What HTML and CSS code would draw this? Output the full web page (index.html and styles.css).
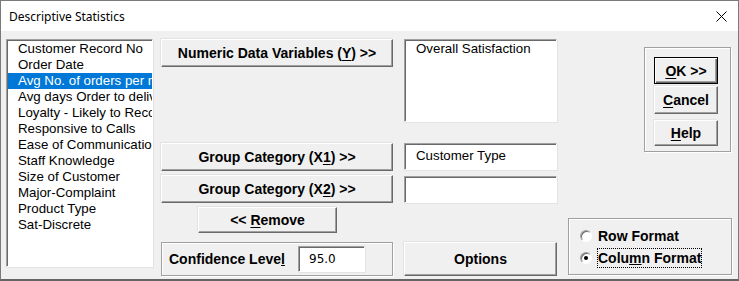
FILE: index.html
```html
<!DOCTYPE html>
<html>
    <head>
        <title>Descriptive Statistics</title>
        <link rel="stylesheet" href="styles.css">
    </head>
    <body>
        <div class="dialog">
            <div class="titlebar">
                <span class="title">Descriptive Statistics</span>
                <svg class="close" width="11" height="11" viewBox="0 0 11 11">
                    <path d="M0.5 0.5 L10.5 10.5 M10.5 0.5 L0.5 10.5" stroke="#000" stroke-width="1" fill="none"/>
                </svg>
            </div>
            <div class="dialog-body">
                <div class="col-list">
                    <ul class="listbox">
                        <li>Customer Record No</li>
                        <li>Order Date</li>
                        <li class="selected">Avg No. of orders per month</li>
                        <li>Avg days Order to delivery</li>
                        <li>Loyalty - Likely to Recommend</li>
                        <li>Responsive to Calls</li>
                        <li>Ease of Communication</li>
                        <li>Staff Knowledge</li>
                        <li>Size of Customer</li>
                        <li>Major-Complaint</li>
                        <li>Product Type</li>
                        <li>Sat-Discrete</li>
                    </ul>
                </div>

                <div class="col-buttons">
                    <button class="btn btn-numeric">Numeric Data Variables (<u>Y</u>) &gt;&gt;</button>
                    <button class="btn btn-group1">Group Category (X<u>1</u>) &gt;&gt;</button>
                    <button class="btn btn-group2">Group Category (X<u>2</u>) &gt;&gt;</button>
                    <button class="btn btn-remove">&lt;&lt; <u>R</u>emove</button>
                    <div class="frame frame-confidence">
                        <span class="label">Confidence Leve<u>l</u></span>
                        <div class="textbox textbox-confidence">95.0</div>
                    </div>
                </div>

                <div class="col-boxes">
                    <div class="textbox box-numeric">Overall Satisfaction</div>
                    <div class="textbox box-group1">Customer Type</div>
                    <div class="textbox box-group2"></div>
                    <button class="btn btn-options">Options</button>
                </div>

                <div class="col-right">
                    <div class="frame frame-actions">
                        <button class="btn btn-ok"><u>O</u>K &gt;&gt;</button>
                        <button class="btn btn-cancel"><u>C</u>ancel</button>
                        <button class="btn btn-help"><u>H</u>elp</button>
                    </div>
                    <div class="frame frame-format">
                        <div class="radio-row">
                            <span class="radio"></span>
                            <span class="radio-label">Row Format</span>
                        </div>
                        <div class="radio-row">
                            <span class="radio checked"></span>
                            <span class="radio-label focused">Colu<u>m</u>n Format</span>
                        </div>
                    </div>
                </div>
            </div>
        </div>
    </body>
</html>
```

FILE: styles.css
```css
html, body {
    margin: 0;
    padding: 0;
    background-color: #f0f0f0;
}

.dialog {
    width: 739px;
    height: 281px;
    box-sizing: border-box;
    border: 1px solid #7a7a7a;
    border-bottom: 2px solid #646464;
    background-color: #f0f0f0;
    font-family: "Liberation Sans", Arial, sans-serif;
    color: #000;
}

.titlebar {
    height: 30px;
    background-color: #fff;
    display: flex;
    align-items: center;
    justify-content: space-between;
    padding: 0 10px 0 8px;
}

.title {
    font-family: "Noto Sans", sans-serif;
    font-size: 12px;
}

.close {
    margin-right: 1px;
}

.dialog-body {
    display: flex;
    padding: 8px 0 0 5px;
}

/* left list */
.listbox {
    width: 147px;
    height: 228px;
    box-sizing: border-box;
    margin: 0;
    padding: 0;
    list-style: none;
    background-color: #fff;
    border-top: 1px solid #a0a0a0;
    border-left: 1px solid #a0a0a0;
    border-right: 1px solid #fff;
    border-bottom: 1px solid #fff;
    box-shadow: inset 1px 1px 0 #696969, 1px 1px 0 #e3e3e3;
    overflow: hidden;
    padding-top: 1px;
    padding-left: 1px;
}

.listbox li {
    height: 16px;
    line-height: 16px;
    padding-left: 10px;
    font-size: 13.3px;
    white-space: nowrap;
    overflow: hidden;
}

.listbox li.selected {
    background-color: #0078d7;
    color: #fff;
}

/* buttons */
.btn {
    display: block;
    box-sizing: border-box;
    background-color: #f0f0f0;
    border: none;
    border-top: 1px solid #fff;
    border-left: 1px solid #fff;
    border-right: 1px solid #696969;
    border-bottom: 1px solid #696969;
    box-shadow: inset -1px -1px 0 #a0a0a0, -1px -1px 0 #e3e3e3;
    font-family: "Liberation Sans", Arial, sans-serif;
    font-weight: bold;
    font-size: 14px;
    color: #000;
    padding: 0;
    text-align: center;
}

.btn u {
    text-underline-offset: 2px;
}

.col-buttons {
    width: 232px;
    margin-left: 8px;
    display: flex;
    flex-direction: column;
}

.btn-numeric {
    width: 232px;
    height: 28px;
}

.btn-group1 {
    width: 232px;
    height: 28px;
    margin-top: 76px;
}

.btn-group2 {
    width: 232px;
    height: 28px;
    margin-top: 4px;
}

.btn-remove {
    width: 139px;
    height: 26px;
    margin-top: 4px;
    margin-left: 37px;
}

/* etched frames */
.frame {
    box-sizing: border-box;
    border: 1px solid #a0a0a0;
    box-shadow: inset 1px 1px 0 #fff, 1px 1px 0 #fff;
}

.frame-confidence {
    height: 34px;
    margin-top: 9px;
    display: flex;
    align-items: center;
    padding-left: 7px;
}

.label {
    font-weight: bold;
    font-size: 14px;
    width: 129px;
}

.textbox {
    box-sizing: border-box;
    background-color: #fff;
    border-top: 1px solid #a0a0a0;
    border-left: 1px solid #a0a0a0;
    border-right: 1px solid #fff;
    border-bottom: 1px solid #fff;
    box-shadow: inset 1px 1px 0 #696969, 1px 1px 0 #e3e3e3;
    font-size: 13.3px;
    padding-left: 11px;
}

.textbox-confidence {
    width: 67px;
    height: 26px;
    line-height: 24px;
    padding-left: 10px;
    font-family: "DejaVu Sans", sans-serif;
    font-size: 12px;
}

.col-boxes {
    width: 153px;
    margin-left: 11px;
    display: flex;
    flex-direction: column;
}

.box-numeric {
    height: 83px;
    padding-top: 1px;
    line-height: 16px;
}

.box-group1 {
    height: 27px;
    margin-top: 21px;
    line-height: 23px;
}

.box-group2 {
    height: 27px;
    margin-top: 6px;
}

.btn-options {
    width: 153px;
    height: 34px;
    margin-top: 39px;
}

/* right column */
.col-right {
    width: 164px;
    margin-left: 11px;
    display: flex;
    flex-direction: column;
}

.frame-actions {
    width: 87px;
    height: 105px;
    margin-top: 8px;
    margin-left: 76px;
    padding: 9px 0 0 9px;
}

.btn-ok {
    width: 64px;
    height: 27px;
    border: 1px solid #000;
    box-shadow: inset 1px 1px 0 #fff, inset -1px -1px 0 #696969, inset -2px -2px 0 #a0a0a0;
}

.btn-cancel {
    width: 64px;
    height: 28px;
    margin-top: 2px;
}

.btn-help {
    width: 64px;
    height: 26px;
    margin-top: 6px;
}

.frame-format {
    width: 164px;
    height: 57px;
    margin-top: 66px;
    padding: 6px 0 0 11px;
}

.radio-row {
    display: flex;
    align-items: center;
    height: 22px;
}

.radio {
    width: 12px;
    height: 12px;
    box-sizing: border-box;
    border-radius: 50%;
    border: 1px solid;
    border-color: #a0a0a0 #fff #fff #a0a0a0;
    background-color: #fff;
    box-shadow: inset 1px 1px 0 #696969;
    position: relative;
    margin-right: 5px;
}

.radio.checked::after {
    content: "";
    position: absolute;
    left: 3px;
    top: 3px;
    width: 4px;
    height: 4px;
    border-radius: 50%;
    background-color: #000;
}

.radio-label {
    font-weight: bold;
    font-size: 14px;
    padding: 2px 1px;
}

.radio-label.focused {
    border: 1px dotted #000;
    padding: 1px 0;
}
```
